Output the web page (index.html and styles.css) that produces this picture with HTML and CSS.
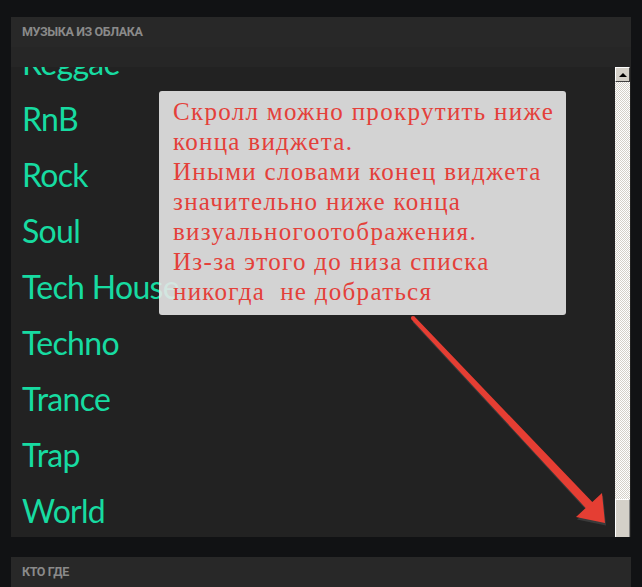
FILE: index.html
```html
<!DOCTYPE html>
<html lang="ru">
<head>
    <meta charset="UTF-8">
    <title>Музыка из облака</title>
    <link rel="stylesheet" href="styles.css">
</head>
<body>
    <div class="widget">
        <div class="widget-title">Музыка из облака</div>
        <div class="widget-band"></div>
        <div class="widget-body">
            <ul class="genres">
                <li>Reggae</li>
                <li>RnB</li>
                <li>Rock</li>
                <li>Soul</li>
                <li>Tech House</li>
                <li>Techno</li>
                <li>Trance</li>
                <li>Trap</li>
                <li>World</li>
            </ul>
            <div class="scrollbar">
                <div class="scroll-btn"><span class="tri"></span></div>
                <div class="scroll-track"></div>
                <div class="scroll-thumb"></div>
            </div>

            <div class="note">
                Скролл можно прокрутить ниже<br>
                конца виджета.<br>
                Иными словами конец виджета<br>
                значительно ниже конца<br>
                визуальногоотображения.<br>
                Из-за этого до низа списка<br>
                никогда &nbsp;не добраться
            </div>

            <svg class="arrow" width="620" height="470" viewBox="0 0 620 470">
                <g transform="translate(-11 -67)">
                    <polygon fill="#3a3a3a" transform="translate(1 2.5)"
                        points="414.5,316.6 592.3,501.9 602,493 605,523 576,517 585.7,508.1 411.5,319.4"/>
                    <polygon fill="#e53e33"
                        points="414.5,316.6 592.3,501.9 602,493 605,523 576,517 585.7,508.1 411.5,319.4"/>
                    <circle cx="413" cy="318" r="2.1" fill="#e53e33"/>
                </g>
            </svg>
        </div>
    </div>

    <div class="widget">
        <div class="widget-title">Кто где</div>
    </div>
</body>
</html>
```

FILE: styles.css
```css
body {
    margin: 0;
    background-color: #111214;
    padding: 17px 11px 0 11px;
    font-family: Lato, "Open Sans", sans-serif;
    overflow: hidden;
    height: 570px;
}

.widget {
    width: 620px;
    background: #222222;
    margin-bottom: 20px;
}

.widget-title {
    height: 30px;
    line-height: 30px;
    padding-left: 11px;
    background: #282828;
    color: #8a8a8a;
    font-family: Roboto, "Liberation Sans", sans-serif;
    font-weight: bold;
    font-size: 12.5px;
    text-transform: uppercase;
    letter-spacing: -0.4px;
}

.widget-band {
    height: 20px;
    background: #262626;
}

.widget-body {
    position: relative;
    height: 470px;
    overflow: hidden;
    display: flex;
}

.genres {
    flex: 1;
    list-style: none;
    margin: -32px 0 0 0;
    padding: 0 0 0 11px;
}

.genres li {
    font-size: 32px;
    line-height: 56px;
    letter-spacing: -0.7px;
    color: #17dba1;
    white-space: nowrap;
}

.scrollbar {
    width: 15px;
    margin-right: 1px;
    display: flex;
    flex-direction: column;
}

.scroll-btn {
    height: 15px;
    box-sizing: border-box;
    background: #d4d0c8;
    border-top: 1px solid #ffffff;
    border-left: 1px solid #ffffff;
    border-right: 1px solid #404040;
    border-bottom: 1px solid #404040;
    display: flex;
    align-items: center;
    justify-content: center;
}

.tri {
    width: 0;
    height: 0;
    border-left: 4px solid transparent;
    border-right: 4px solid transparent;
    border-bottom: 4px solid #000;
}

.scroll-track {
    flex: 1;
    background-color: #ffffff;
    background-image: repeating-conic-gradient(#d4d0c8 0 25%, #ffffff 0 50%);
    background-size: 2px 2px;
}

.scroll-thumb {
    height: 38px;
    box-sizing: border-box;
    background: #d4d0c8;
    border-top: 1px solid #ffffff;
    border-left: 1px solid #ffffff;
    border-right: 1px solid #808080;
}

.note {
    position: absolute;
    left: 148px;
    top: 24px;
    width: 407px;
    height: 224px;
    box-sizing: border-box;
    padding: 6px 0 0 14px;
    background: rgba(231, 231, 231, 0.9);
    border-radius: 3px;
    color: #e4403a;
    font-family: "Liberation Serif", serif;
    font-size: 25px;
    line-height: 30px;
    letter-spacing: 1.3px;
    white-space: nowrap;
}

.arrow {
    position: absolute;
    left: 0;
    top: 0;
}
```
